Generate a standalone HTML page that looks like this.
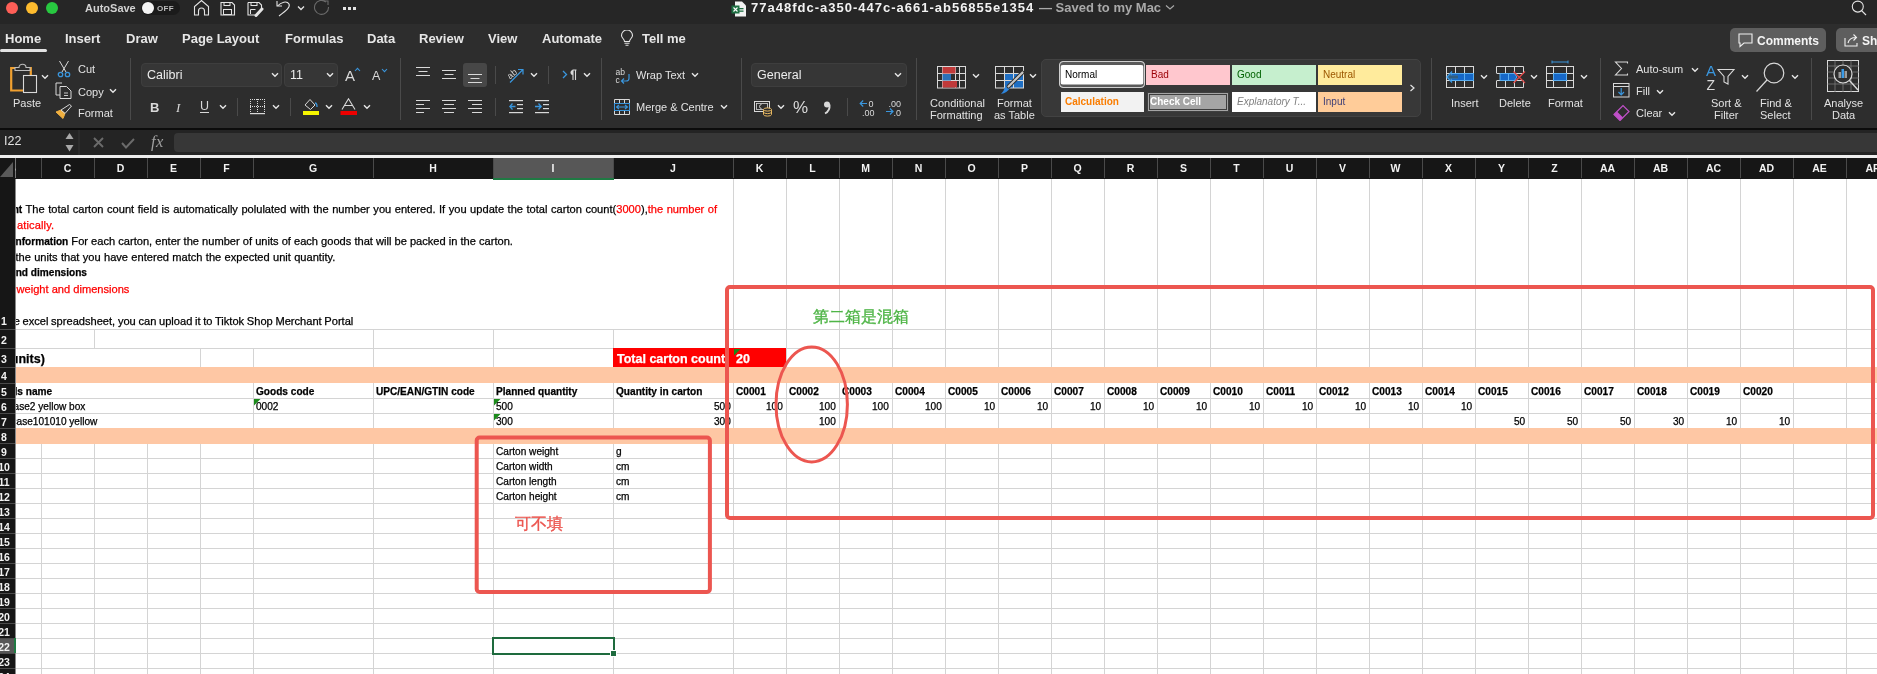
<!DOCTYPE html><html><head><meta charset="utf-8"><style>
html,body{margin:0;padding:0;}
body{width:1877px;height:674px;overflow:hidden;position:relative;background:#ffffff;font-family:"Liberation Sans", sans-serif;}
.t{position:absolute;white-space:pre;line-height:1;will-change:transform;}
.r{position:absolute;}
.g{-webkit-text-stroke:0.25px currentColor;}

</style></head><body>
<div class="r" style="left:0px;top:0px;width:1877px;height:24px;background:#262626;"></div>
<div class="r" style="left:0px;top:24px;width:1877px;height:104px;background:#2d2d2d;"></div>
<div class="r" style="left:0px;top:128px;width:1877px;height:1.5px;background:#0c0c0c;"></div>
<div class="r" style="left:0px;top:129.5px;width:1877px;height:25.5px;background:#242424;"></div>
<div class="r" style="left:0px;top:155px;width:1877px;height:3px;background:#eeeeee;"></div>
<div class="r" style="left:0px;top:158px;width:1877px;height:21px;background:#161616;"></div>
<div class="r" style="left:6px;top:2px;width:12px;height:12px;border-radius:50%;background:#fe5f57"></div>
<div class="r" style="left:26px;top:2px;width:12px;height:12px;border-radius:50%;background:#febc2e"></div>
<div class="r" style="left:46px;top:2px;width:12px;height:12px;border-radius:50%;background:#28c840"></div>
<div class="t" style="left:85px;top:3.09px;font-size:11px;color:#d2d2d2;font-weight:bold;">AutoSave</div>
<div class="r" style="left:141px;top:1px;width:39px;height:14px;border-radius:7px;background:#1b1b1b"></div>
<div class="r" style="left:142px;top:2px;width:12px;height:12px;border-radius:50%;background:#f4f4f4"></div>
<div class="t" style="left:157px;top:4.83px;font-size:8px;color:#bdbdbd;font-weight:bold;letter-spacing:0.3px;">OFF</div>
<svg class="r" style="left:193px;top:0px;" width="17" height="16" viewBox="0 0 17 16"><path d="M1.5 15 V6.5 L8.5 0.5 L15.5 6.5 V15 H11.5 V11 a3 3 0 0 0 -6 0 V15 Z" fill="none" stroke="#e4e4e4" stroke-width="1.1"/></svg>
<svg class="r" style="left:220px;top:1px;" width="16" height="15" viewBox="0 0 16 15"><path d="M1 1.5 h11 l2.5 2.5 v10 h-13.5 z" fill="none" stroke="#e4e4e4" stroke-width="1.1"/><rect x="4" y="1.5" width="6" height="3" fill="none" stroke="#e4e4e4" stroke-width="1"/><rect x="3.5" y="8.5" width="8" height="5" fill="none" stroke="#e4e4e4" stroke-width="1"/></svg>
<svg class="r" style="left:247px;top:1px;" width="17" height="16" viewBox="0 0 17 16"><path d="M1 1.5 h11 l2.5 2.5 v3 M8 14 h-7 v-12.5" fill="none" stroke="#e4e4e4" stroke-width="1.1"/><rect x="4" y="1.5" width="6" height="3" fill="none" stroke="#e4e4e4" stroke-width="1"/><path d="M3.5 13 v-4.5 h5" fill="none" stroke="#e4e4e4" stroke-width="1"/><path d="M9 14.5 L15 8" stroke="#e4e4e4" stroke-width="3" stroke-linecap="round"/></svg>
<svg class="r" style="left:275px;top:0px;" width="16" height="17" viewBox="0 0 16 17"><path d="M2 1 v5 h5" fill="none" stroke="#e4e4e4" stroke-width="1.1"/><path d="M2.5 6 C6 2 12 0.5 14 4 C15.5 7 12 10 4 16" fill="none" stroke="#e4e4e4" stroke-width="1.1"/></svg>
<svg class="r" style="left:297px;top:5px;" width="8" height="7" viewBox="0 0 8 7"><path d="M1 1.5 L4 4.5 L7 1.5" fill="none" stroke="#e4e4e4" stroke-width="1.3"/></svg>
<svg class="r" style="left:313px;top:0px;" width="18" height="17" viewBox="0 0 18 17"><path d="M13 2 A7 7 0 1 0 15.5 7" fill="none" stroke="#6a6a6a" stroke-width="1.1"/><path d="M11 1 h4 v4" fill="none" stroke="#6a6a6a" stroke-width="1.1"/></svg>
<div class="r" style="left:343px;top:7px;width:2.5px;height:2.5px;background:#e4e4e4"></div>
<div class="r" style="left:348px;top:7px;width:2.5px;height:2.5px;background:#e4e4e4"></div>
<div class="r" style="left:353px;top:7px;width:2.5px;height:2.5px;background:#e4e4e4"></div>
<svg class="r" style="left:731px;top:1px;" width="16" height="16" viewBox="0 0 16 16"><path d="M4 0.5 h7 l4 4 v11 h-11 z" fill="#f2f2f2"/><rect x="7.5" y="7" width="5" height="1.3" fill="#1d6f42"/><rect x="7.5" y="9.5" width="5" height="1.3" fill="#1d6f42"/><rect x="0.5" y="4.5" width="8" height="8" fill="#1d6f42"/><path d="M2.5 6.5 L6.5 10.5 M6.5 6.5 L2.5 10.5" stroke="#fff" stroke-width="1.1"/></svg>
<div class="t" style="left:751px;top:1.00px;font-size:13px;color:#f2f2f2;font-weight:bold;letter-spacing:1px;">77a48fdc-a350-447c-a661-ab56855e1354</div>
<div class="t" style="left:1039px;top:1.00px;font-size:13px;color:#a9a9a9;font-weight:bold;">— Saved to my Mac</div>
<svg class="r" style="left:1165px;top:4px;" width="10" height="7" viewBox="0 0 10 7"><path d="M1 1.5 L5 5 L9 1.5" fill="none" stroke="#a9a9a9" stroke-width="1.1"/></svg>
<svg class="r" style="left:1851px;top:0px;" width="17" height="17" viewBox="0 0 17 17"><circle cx="6.8" cy="6.6" r="5.5" fill="none" stroke="#e4e4e4" stroke-width="1.1"/><path d="M10.6 10.6 L15 15" stroke="#e4e4e4" stroke-width="1.2"/></svg>
<div class="t" style="left:4.5px;top:31.80px;font-size:13px;color:#e6e6e6;font-weight:bold;">Home</div>
<div class="t" style="left:64.6px;top:31.80px;font-size:13px;color:#e6e6e6;font-weight:bold;">Insert</div>
<div class="t" style="left:126.4px;top:31.80px;font-size:13px;color:#e6e6e6;font-weight:bold;">Draw</div>
<div class="t" style="left:182.3px;top:31.80px;font-size:13px;color:#e6e6e6;font-weight:bold;">Page Layout</div>
<div class="t" style="left:284.7px;top:31.80px;font-size:13px;color:#e6e6e6;font-weight:bold;">Formulas</div>
<div class="t" style="left:367.3px;top:31.80px;font-size:13px;color:#e6e6e6;font-weight:bold;">Data</div>
<div class="t" style="left:419.4px;top:31.80px;font-size:13px;color:#e6e6e6;font-weight:bold;">Review</div>
<div class="t" style="left:487.7px;top:31.80px;font-size:13px;color:#e6e6e6;font-weight:bold;">View</div>
<div class="t" style="left:542.4px;top:31.80px;font-size:13px;color:#e6e6e6;font-weight:bold;">Automate</div>
<div class="t" style="left:641.6px;top:31.80px;font-size:13px;color:#e6e6e6;font-weight:bold;">Tell me</div>
<div class="r" style="left:0px;top:49px;width:47px;height:3px;border-radius:2px;background:#e2e2e2"></div>
<svg class="r" style="left:620px;top:30px;" width="14" height="17" viewBox="0 0 14 17"><path d="M4.5 11.5 C4.5 9 1.5 8 1.5 5.5 A5.5 5.5 0 0 1 12.5 5.5 C12.5 8 9.5 9 9.5 11.5 Z" fill="none" stroke="#e4e4e4" stroke-width="1.1"/><path d="M4.5 13.3 h5 M5.5 15.3 h3" stroke="#e4e4e4" stroke-width="1.1"/></svg>
<div class="r" style="left:1730px;top:28px;width:96px;height:24px;border-radius:5px;background:#5e5e5e"></div>
<svg class="r" style="left:1738px;top:33px;" width="15" height="15" viewBox="0 0 15 15"><path d="M1 1 h13 v9 h-8 l-4 3.5 v-3.5 h-1 z" fill="none" stroke="#f0f0f0" stroke-width="1.1"/></svg>
<div class="t" style="left:1757px;top:35.14px;font-size:12px;color:#f4f4f4;font-weight:bold;">Comments</div>
<div class="r" style="left:1836px;top:28px;width:60px;height:24px;border-radius:5px;background:#5e5e5e"></div>
<svg class="r" style="left:1844px;top:33px;" width="15" height="14" viewBox="0 0 15 14"><path d="M1 5 v8 h12 v-3" fill="none" stroke="#f0f0f0" stroke-width="1.1"/><path d="M4 10 C5 6 8 4.5 12 4.5 M9.5 1.5 L12.5 4.5 L9.5 7.5" fill="none" stroke="#f0f0f0" stroke-width="1.1"/></svg>
<div class="t" style="left:1862px;top:35.14px;font-size:12px;color:#f4f4f4;font-weight:bold;">Sh</div>
<svg class="r" style="left:9px;top:61px;" width="30" height="33" viewBox="0 0 30 33"><path d="M9 7 H2.2 V29.5 H14" fill="none" stroke="#f0a030" stroke-width="2.2"/><path d="M19 7 H21.8 V14" fill="none" stroke="#f0a030" stroke-width="2.2"/><path d="M6 9.5 V6.5 H10 A3.5 3.2 0 0 1 17 6.5 H21 V9.5 Z" fill="#2d2d2d" stroke="#bdbdbd" stroke-width="1.1"/><rect x="14.5" y="14.5" width="13" height="17" fill="#2d2d2d" stroke="#d9d9d9" stroke-width="1.1"/></svg>
<svg class="r" style="left:41px;top:74px;" width="8" height="6" viewBox="0 0 8 6"><path d="M1 1.2 L4 4.2 L7 1.2" fill="none" stroke="#e6e6e6" stroke-width="1.4"/></svg>
<div class="t" style="left:13.3px;top:97.69px;font-size:11px;color:#e2e2e2;font-weight:normal;">Paste</div>
<svg class="r" style="left:57px;top:60px;" width="14" height="18" viewBox="0 0 14 18"><path d="M2.5 1 L9 12 M11.5 1 L5 12" stroke="#d9d9d9" stroke-width="1"/><circle cx="3.5" cy="14.5" r="2.2" fill="none" stroke="#3a96dd" stroke-width="1.3"/><circle cx="10.5" cy="14.5" r="2.2" fill="none" stroke="#3a96dd" stroke-width="1.3"/></svg>
<div class="t" style="left:78.3px;top:64.49px;font-size:11px;color:#e2e2e2;font-weight:normal;">Cut</div>
<svg class="r" style="left:55px;top:82px;" width="18" height="18" viewBox="0 0 18 18"><path d="M7 1 H1 V13 H5" fill="none" stroke="#d9d9d9" stroke-width="1"/><path d="M5 4.5 H11.5 L16 9 V16.5 H5 Z" fill="none" stroke="#d9d9d9" stroke-width="1"/><path d="M9 11 H13 M9 13.5 H13" stroke="#d9d9d9" stroke-width="0.9"/></svg>
<div class="t" style="left:78.3px;top:86.89px;font-size:11px;color:#e2e2e2;font-weight:normal;">Copy</div>
<svg class="r" style="left:109px;top:88px;" width="8" height="6" viewBox="0 0 8 6"><path d="M1 1.2 L4 4.2 L7 1.2" fill="none" stroke="#e6e6e6" stroke-width="1.4"/></svg>
<svg class="r" style="left:55px;top:104px;" width="18" height="17" viewBox="0 0 18 17"><path d="M1 8 L8 14.5 L10 9.5 L6 6 Z" fill="#f0b040" stroke="#f0b040" stroke-width="1"/><path d="M6 6 L10 9.5 L16.5 2 L14.5 0.5 Z" fill="none" stroke="#d9d9d9" stroke-width="1"/></svg>
<div class="t" style="left:78.3px;top:108.09px;font-size:11px;color:#e2e2e2;font-weight:normal;">Format</div>
<div class="r" style="left:130px;top:58px;width:1px;height:62px;background:#4a4a4a;"></div>
<div class="r" style="left:141px;top:63px;width:139px;height:22px;border-radius:4px;background:#363636;border:1px solid #3e3e3e"></div>
<div class="t" style="left:147.4px;top:69.12px;font-size:12.5px;color:#ececec;font-weight:normal;">Calibri</div>
<svg class="r" style="left:271px;top:72px;" width="8" height="6" viewBox="0 0 8 6"><path d="M1 1.2 L4 4.2 L7 1.2" fill="none" stroke="#e6e6e6" stroke-width="1.4"/></svg>
<div class="r" style="left:284px;top:63px;width:52px;height:22px;border-radius:4px;background:#363636;border:1px solid #3e3e3e"></div>
<div class="t" style="left:290.3px;top:69.12px;font-size:12.5px;color:#ececec;font-weight:normal;">11</div>
<svg class="r" style="left:326px;top:72px;" width="8" height="6" viewBox="0 0 8 6"><path d="M1 1.2 L4 4.2 L7 1.2" fill="none" stroke="#e6e6e6" stroke-width="1.4"/></svg>
<div class="t" style="left:344.5px;top:67.70px;font-size:15px;color:#d9d9d9;font-weight:normal;">A</div>
<svg class="r" style="left:354px;top:67px;" width="7" height="5" viewBox="0 0 7 5"><path d="M1 4 L3.5 1.3 L6 4" fill="none" stroke="#3a96dd" stroke-width="1.1"/></svg>
<div class="t" style="left:372px;top:69.82px;font-size:12.5px;color:#d9d9d9;font-weight:normal;">A</div>
<svg class="r" style="left:380.5px;top:67.5px;" width="7" height="5" viewBox="0 0 7 5"><path d="M1 1 L3.5 3.7 L6 1" fill="none" stroke="#3a96dd" stroke-width="1.1"/></svg>
<div class="t" style="left:149.5px;top:100.50px;font-size:13px;color:#d9d9d9;font-weight:bold;">B</div>
<div class="t" style="left:176px;top:100.50px;font-size:13px;color:#d9d9d9;font-weight:normal;font-style:italic;font-family:&quot;Liberation Serif&quot;,serif;">I</div>
<div class="t" style="left:200px;top:99.92px;font-size:12.5px;color:#d9d9d9;font-weight:normal;">U</div>
<div class="r" style="left:200px;top:112px;width:9px;height:1px;background:#d9d9d9;"></div>
<svg class="r" style="left:219px;top:104px;" width="8" height="6" viewBox="0 0 8 6"><path d="M1 1.2 L4 4.2 L7 1.2" fill="none" stroke="#e6e6e6" stroke-width="1.4"/></svg>
<div class="r" style="left:237px;top:98px;width:1px;height:18px;background:#4a4a4a;"></div>
<svg class="r" style="left:250px;top:99px;" width="16" height="16" viewBox="0 0 16 16"><rect x="0" y="0" width="1" height="1" fill="#d9d9d9"/><rect x="0" y="0" width="1" height="1" fill="#d9d9d9"/><rect x="14" y="0" width="1" height="1" fill="#d9d9d9"/><rect x="7" y="0" width="1" height="1" fill="#d9d9d9"/><rect x="0" y="7" width="1" height="1" fill="#d9d9d9"/><rect x="2" y="0" width="1" height="1" fill="#d9d9d9"/><rect x="0" y="2" width="1" height="1" fill="#d9d9d9"/><rect x="14" y="2" width="1" height="1" fill="#d9d9d9"/><rect x="7" y="2" width="1" height="1" fill="#d9d9d9"/><rect x="2" y="7" width="1" height="1" fill="#d9d9d9"/><rect x="4" y="0" width="1" height="1" fill="#d9d9d9"/><rect x="0" y="4" width="1" height="1" fill="#d9d9d9"/><rect x="14" y="4" width="1" height="1" fill="#d9d9d9"/><rect x="7" y="4" width="1" height="1" fill="#d9d9d9"/><rect x="4" y="7" width="1" height="1" fill="#d9d9d9"/><rect x="6" y="0" width="1" height="1" fill="#d9d9d9"/><rect x="0" y="6" width="1" height="1" fill="#d9d9d9"/><rect x="14" y="6" width="1" height="1" fill="#d9d9d9"/><rect x="7" y="6" width="1" height="1" fill="#d9d9d9"/><rect x="6" y="7" width="1" height="1" fill="#d9d9d9"/><rect x="8" y="0" width="1" height="1" fill="#d9d9d9"/><rect x="0" y="8" width="1" height="1" fill="#d9d9d9"/><rect x="14" y="8" width="1" height="1" fill="#d9d9d9"/><rect x="7" y="8" width="1" height="1" fill="#d9d9d9"/><rect x="8" y="7" width="1" height="1" fill="#d9d9d9"/><rect x="10" y="0" width="1" height="1" fill="#d9d9d9"/><rect x="0" y="10" width="1" height="1" fill="#d9d9d9"/><rect x="14" y="10" width="1" height="1" fill="#d9d9d9"/><rect x="7" y="10" width="1" height="1" fill="#d9d9d9"/><rect x="10" y="7" width="1" height="1" fill="#d9d9d9"/><rect x="12" y="0" width="1" height="1" fill="#d9d9d9"/><rect x="0" y="12" width="1" height="1" fill="#d9d9d9"/><rect x="14" y="12" width="1" height="1" fill="#d9d9d9"/><rect x="7" y="12" width="1" height="1" fill="#d9d9d9"/><rect x="12" y="7" width="1" height="1" fill="#d9d9d9"/><rect x="14" y="0" width="1" height="1" fill="#d9d9d9"/><rect x="0" y="14" width="1" height="1" fill="#d9d9d9"/><rect x="14" y="14" width="1" height="1" fill="#d9d9d9"/><rect x="7" y="14" width="1" height="1" fill="#d9d9d9"/><rect x="14" y="7" width="1" height="1" fill="#d9d9d9"/><rect x="0" y="14" width="15" height="1.2" fill="#d9d9d9"/></svg>
<svg class="r" style="left:272px;top:104px;" width="8" height="6" viewBox="0 0 8 6"><path d="M1 1.2 L4 4.2 L7 1.2" fill="none" stroke="#e6e6e6" stroke-width="1.4"/></svg>
<div class="r" style="left:290px;top:98px;width:1px;height:18px;background:#4a4a4a;"></div>
<svg class="r" style="left:302px;top:98px;" width="18" height="18" viewBox="0 0 18 18"><path d="M3 7 L8 1.5 L13 7 L8.5 11.5 Z" fill="none" stroke="#d9d9d9" stroke-width="1"/><path d="M13 5 Q15 5 15 9" fill="none" stroke="#3a96dd" stroke-width="1.3"/><rect x="1" y="13" width="16" height="4" fill="#f5f500"/></svg>
<svg class="r" style="left:325px;top:104px;" width="8" height="6" viewBox="0 0 8 6"><path d="M1 1.2 L4 4.2 L7 1.2" fill="none" stroke="#e6e6e6" stroke-width="1.4"/></svg>
<svg class="r" style="left:340px;top:98px;" width="18" height="18" viewBox="0 0 18 18"><path d="M2 11.5 L8.5 0.8 L15 11.5 M4.5 7.5 H12.5" fill="none" stroke="#d9d9d9" stroke-width="1.1"/><rect x="0.5" y="13" width="16.5" height="4" fill="#ee0000"/></svg>
<svg class="r" style="left:363px;top:104px;" width="8" height="6" viewBox="0 0 8 6"><path d="M1 1.2 L4 4.2 L7 1.2" fill="none" stroke="#e6e6e6" stroke-width="1.4"/></svg>
<div class="r" style="left:400px;top:58px;width:1px;height:62px;background:#4a4a4a;"></div>
<svg class="r" style="left:416px;top:67px;" width="14" height="14" viewBox="0 0 14 14"><rect x="0.0" y="0" width="14" height="1" fill="#d9d9d9"/><rect x="2.5" y="4" width="9" height="1" fill="#d9d9d9"/><rect x="0.0" y="8" width="14" height="1" fill="#d9d9d9"/></svg>
<svg class="r" style="left:442px;top:70px;" width="14" height="14" viewBox="0 0 14 14"><rect x="0.0" y="0" width="14" height="1" fill="#d9d9d9"/><rect x="2.5" y="4" width="9" height="1" fill="#d9d9d9"/><rect x="0.0" y="8" width="14" height="1" fill="#d9d9d9"/></svg>
<div class="r" style="left:463px;top:63px;width:24px;height:24px;border-radius:3px;background:#474747"></div>
<svg class="r" style="left:468px;top:74px;" width="14" height="14" viewBox="0 0 14 14"><rect x="0.0" y="0" width="14" height="1" fill="#d9d9d9"/><rect x="2.5" y="4" width="9" height="1" fill="#d9d9d9"/><rect x="0.0" y="8" width="14" height="1" fill="#d9d9d9"/></svg>
<div class="r" style="left:495px;top:66px;width:1px;height:18px;background:#4a4a4a;"></div>
<svg class="r" style="left:506px;top:66px;" width="20" height="18" viewBox="0 0 20 18"><text x="1" y="11" font-size="9" fill="#d9d9d9" font-family="Liberation Sans" transform="rotate(-40 6 8)">ab</text><path d="M4 16.5 L17 3.5 M12 3.5 H17 V8.5" fill="none" stroke="#3a96dd" stroke-width="1.2"/></svg>
<svg class="r" style="left:530px;top:72px;" width="8" height="6" viewBox="0 0 8 6"><path d="M1 1.2 L4 4.2 L7 1.2" fill="none" stroke="#e6e6e6" stroke-width="1.4"/></svg>
<div class="r" style="left:548px;top:66px;width:1px;height:18px;background:#4a4a4a;"></div>
<svg class="r" style="left:562px;top:70px;" width="6" height="10" viewBox="0 0 6 10"><path d="M1 1 L4.5 4.5 L1 8" fill="none" stroke="#3a96dd" stroke-width="1.3"/></svg>
<svg class="r" style="left:568px;top:69px;" width="9" height="12" viewBox="0 0 9 12"><path d="M4.5 1 H8.5 M5 1 V11 M7.5 1 V11" stroke="#d9d9d9" stroke-width="1.1"/><path d="M5 1 A2.5 2.5 0 0 0 5 6 Z" fill="#d9d9d9"/></svg>
<svg class="r" style="left:583px;top:72px;" width="8" height="6" viewBox="0 0 8 6"><path d="M1 1.2 L4 4.2 L7 1.2" fill="none" stroke="#e6e6e6" stroke-width="1.4"/></svg>
<svg class="r" style="left:416px;top:100px;" width="14" height="18" viewBox="0 0 14 18"><rect x="0" y="0" width="14" height="1" fill="#d9d9d9"/><rect x="0" y="4" width="8" height="1" fill="#d9d9d9"/><rect x="0" y="8" width="14" height="1" fill="#d9d9d9"/><rect x="0" y="12" width="8" height="1" fill="#d9d9d9"/></svg>
<svg class="r" style="left:442px;top:100px;" width="14" height="18" viewBox="0 0 14 18"><rect x="0.0" y="0" width="14" height="1" fill="#d9d9d9"/><rect x="2.0" y="4" width="10" height="1" fill="#d9d9d9"/><rect x="0.0" y="8" width="14" height="1" fill="#d9d9d9"/><rect x="2.0" y="12" width="10" height="1" fill="#d9d9d9"/></svg>
<svg class="r" style="left:468px;top:100px;" width="14" height="18" viewBox="0 0 14 18"><rect x="0" y="0" width="14" height="1" fill="#d9d9d9"/><rect x="4" y="4" width="10" height="1" fill="#d9d9d9"/><rect x="0" y="8" width="14" height="1" fill="#d9d9d9"/><rect x="4" y="12" width="10" height="1" fill="#d9d9d9"/></svg>
<div class="r" style="left:495px;top:98px;width:1px;height:18px;background:#4a4a4a;"></div>
<svg class="r" style="left:509px;top:100px;" width="15" height="14" viewBox="0 0 15 14"><rect x="0" y="0" width="14" height="1.2" fill="#d9d9d9"/><rect x="8" y="4" width="6" height="1.2" fill="#d9d9d9"/><rect x="8" y="8" width="6" height="1.2" fill="#d9d9d9"/><rect x="0" y="12" width="14" height="1.2" fill="#d9d9d9"/><path d="M1 6.5 H6.5 M3.5 3.5 L0.8 6.5 L3.5 9.5" fill="none" stroke="#3a96dd" stroke-width="1.3"/></svg>
<svg class="r" style="left:535px;top:100px;" width="15" height="14" viewBox="0 0 15 14"><rect x="0" y="0" width="14" height="1.2" fill="#d9d9d9"/><rect x="8" y="4" width="6" height="1.2" fill="#d9d9d9"/><rect x="8" y="8" width="6" height="1.2" fill="#d9d9d9"/><rect x="0" y="12" width="14" height="1.2" fill="#d9d9d9"/><path d="M0 6.5 H6 M3.5 3.5 L6.2 6.5 L3.5 9.5" fill="none" stroke="#3a96dd" stroke-width="1.3"/></svg>
<div class="r" style="left:601px;top:58px;width:1px;height:62px;background:#4a4a4a;"></div>
<svg class="r" style="left:615px;top:67px;" width="17" height="17" viewBox="0 0 17 17"><text x="0.5" y="7.5" font-size="8.5" fill="#d9d9d9" font-family="Liberation Sans">ab</text><text x="0.5" y="15.5" font-size="8.5" fill="#d9d9d9" font-family="Liberation Sans">c</text><path d="M14 7 V11.5 Q14 14 11 14 H6.5 M9 11.5 L6.5 14 L9 16.5" fill="none" stroke="#3a96dd" stroke-width="1.2"/></svg>
<div class="t" style="left:636px;top:70.39px;font-size:11px;color:#e2e2e2;font-weight:normal;">Wrap Text</div>
<svg class="r" style="left:691px;top:72px;" width="8" height="6" viewBox="0 0 8 6"><path d="M1 1.2 L4 4.2 L7 1.2" fill="none" stroke="#e6e6e6" stroke-width="1.4"/></svg>
<svg class="r" style="left:613px;top:98px;" width="18" height="18" viewBox="0 0 18 18"><path d="M1.5 5.5 V1.5 H16.5 V5.5 M1.5 12.5 V16.5 H16.5 V12.5 M6.5 1.5 V5.5 M11.5 1.5 V5.5 M6.5 12.5 V16.5 M11.5 12.5 V16.5" fill="none" stroke="#d9d9d9" stroke-width="1"/><rect x="1.5" y="5.5" width="15" height="7" fill="none" stroke="#3a96dd" stroke-width="1"/><path d="M3.5 9 H14.5 M6 7 L3.5 9 L6 11 M12 7 L14.5 9 L12 11" fill="none" stroke="#3a96dd" stroke-width="1.1"/></svg>
<div class="t" style="left:636px;top:101.99px;font-size:11px;color:#e2e2e2;font-weight:normal;">Merge &amp; Centre</div>
<svg class="r" style="left:720px;top:104px;" width="8" height="6" viewBox="0 0 8 6"><path d="M1 1.2 L4 4.2 L7 1.2" fill="none" stroke="#e6e6e6" stroke-width="1.4"/></svg>
<div class="r" style="left:740.5px;top:58px;width:1px;height:62px;background:#4a4a4a;"></div>
<div class="r" style="left:751px;top:63px;width:154px;height:22px;border-radius:4px;background:#363636;border:1px solid #3e3e3e"></div>
<div class="t" style="left:757px;top:69.12px;font-size:12.5px;color:#ececec;font-weight:normal;">General</div>
<svg class="r" style="left:894px;top:72px;" width="8" height="6" viewBox="0 0 8 6"><path d="M1 1.2 L4 4.2 L7 1.2" fill="none" stroke="#e6e6e6" stroke-width="1.4"/></svg>
<svg class="r" style="left:754px;top:100px;" width="19" height="17" viewBox="0 0 19 17"><rect x="0.5" y="1.5" width="15" height="10" fill="none" stroke="#d9d9d9" stroke-width="1"/><rect x="2.5" y="3.5" width="11" height="6" fill="none" stroke="#d9d9d9" stroke-width="0.8"/><path d="M7.5 4.5 A2 2 0 1 0 7.5 8.5" fill="none" stroke="#d9d9d9" stroke-width="0.9"/><path d="M9.5 9.5 V14.5 A4 1.6 0 0 0 17.5 14.5 V9.5" fill="#2d2d2d" stroke="#e8b860" stroke-width="1"/><ellipse cx="13.5" cy="9.5" rx="4" ry="1.6" fill="#2d2d2d" stroke="#e8b860" stroke-width="1"/><path d="M9.5 12 A4 1.6 0 0 0 17.5 12" fill="none" stroke="#e8b860" stroke-width="1"/></svg>
<svg class="r" style="left:777px;top:104px;" width="8" height="6" viewBox="0 0 8 6"><path d="M1 1.2 L4 4.2 L7 1.2" fill="none" stroke="#e6e6e6" stroke-width="1.4"/></svg>
<div class="t" style="left:793px;top:99.11px;font-size:17px;color:#d9d9d9;font-weight:normal;">%</div>
<svg class="r" style="left:822px;top:100px;" width="11" height="15" viewBox="0 0 11 15"><circle cx="5" cy="4.5" r="3" fill="#d9d9d9"/><path d="M7.6 4.5 C8 9 6 12 3 13.5" fill="none" stroke="#d9d9d9" stroke-width="1.8"/></svg>
<div class="r" style="left:847px;top:98px;width:1px;height:18px;background:#4a4a4a;"></div>
<svg class="r" style="left:859px;top:99px;" width="18" height="17" viewBox="0 0 18 17"><path d="M1.5 4.5 H8 M4.2 1.5 L1.2 4.5 L4.2 7.5" fill="none" stroke="#3a96dd" stroke-width="1.2"/><text x="9.5" y="8" font-size="9" fill="#d9d9d9" font-family="Liberation Sans">0</text><text x="3" y="16.5" font-size="9" fill="#d9d9d9" font-family="Liberation Sans">.00</text></svg>
<svg class="r" style="left:885px;top:99px;" width="18" height="17" viewBox="0 0 18 17"><text x="3.5" y="8" font-size="9" fill="#d9d9d9" font-family="Liberation Sans">.00</text><path d="M1 12.5 H8 M5 9.5 L8 12.5 L5 15.5" fill="none" stroke="#3a96dd" stroke-width="1.2"/><text x="8.5" y="16.5" font-size="9" fill="#d9d9d9" font-family="Liberation Sans">.0</text></svg>
<div class="r" style="left:916px;top:58px;width:1px;height:62px;background:#4a4a4a;"></div>
<svg class="r" style="left:937px;top:66px;" width="30" height="24" viewBox="0 0 30 24"><rect x="0.5" y="0.5" width="28" height="21.5" fill="none" stroke="#d9d9d9" stroke-width="1"/><path d="M5.5 0.5 V22 M18.5 0.5 V22 M22.5 0.5 V22 M0.5 7.5 H28.5 M0.5 14.5 H28.5" stroke="#d9d9d9" stroke-width="1"/><rect x="5.5" y="1" width="13" height="6.5" fill="#c03a3a"/><rect x="5.5" y="8" width="8.5" height="6.5" fill="#2a70b8"/><rect x="5.5" y="15" width="14.5" height="6.5" fill="#c03a3a"/></svg>
<svg class="r" style="left:972px;top:73px;" width="8" height="6" viewBox="0 0 8 6"><path d="M1 1.2 L4 4.2 L7 1.2" fill="none" stroke="#e6e6e6" stroke-width="1.4"/></svg>
<div class="t" style="left:929.6px;top:98.29px;font-size:11px;color:#e2e2e2;font-weight:normal;">Conditional</div>
<div class="t" style="left:930px;top:110.09px;font-size:11px;color:#e2e2e2;font-weight:normal;">Formatting</div>
<svg class="r" style="left:995px;top:66px;" width="31" height="30" viewBox="0 0 31 30"><rect x="9.5" y="7.5" width="19" height="14.5" fill="#1f6fc4"/><rect x="0.5" y="0.5" width="28" height="21.5" fill="none" stroke="#d9d9d9" stroke-width="1"/><path d="M9.5 0.5 V22 M18.5 0.5 V22 M0.5 7.5 H28.5 M0.5 14.5 H28.5" stroke="#d9d9d9" stroke-width="1"/><path d="M15 22 Q12 27 6 28 Q9 25 10 21 Q12 18 15 20 Z" fill="#2e86de"/><path d="M13.5 20.5 L27.5 6.5" stroke="#2d2d2d" stroke-width="4" stroke-linecap="round"/><path d="M13.5 20.5 L27.5 6.5" stroke="#c8c8c8" stroke-width="2.2" stroke-linecap="round"/></svg>
<svg class="r" style="left:1029px;top:73px;" width="8" height="6" viewBox="0 0 8 6"><path d="M1 1.2 L4 4.2 L7 1.2" fill="none" stroke="#e6e6e6" stroke-width="1.4"/></svg>
<div class="t" style="left:996.8px;top:98.29px;font-size:11px;color:#e2e2e2;font-weight:normal;">Format</div>
<div class="t" style="left:994px;top:110.09px;font-size:11px;color:#e2e2e2;font-weight:normal;">as Table</div>
<div class="r" style="left:1041px;top:59px;width:378px;height:56px;border-radius:5px;background:#383838;border:1px solid #424242"></div>
<div class="r" style="left:1059px;top:61px;width:86px;height:26.5px;border-radius:4px;background:#ffffff;box-sizing:border-box;border:1px solid #d0d0d0;box-shadow:inset 0 3px 0 #5a5a5a, inset 0 -2.5px 0 #5a5a5a, inset 1px 0 0 #8a8a8a, inset -1px 0 0 #8a8a8a;"></div>
<div class="t" style="left:1064.5px;top:69.94px;font-size:10px;color:#000;font-weight:normal;">Normal</div>
<div class="r" style="left:1146px;top:65px;width:84px;height:20px;background:#ffc7ce;"></div>
<div class="t" style="left:1150.5px;top:70.03px;font-size:10px;color:#9c0006;font-weight:normal;">Bad</div>
<div class="r" style="left:1232px;top:65px;width:84px;height:20px;background:#c6efce;"></div>
<div class="t" style="left:1236.5px;top:70.03px;font-size:10px;color:#006100;font-weight:normal;">Good</div>
<div class="r" style="left:1318px;top:65px;width:84px;height:20px;background:#ffeb9c;"></div>
<div class="t" style="left:1322.5px;top:70.03px;font-size:10px;color:#9c5700;font-weight:normal;">Neutral</div>
<div class="r" style="left:1060.5px;top:92px;width:83px;height:19.5px;background:#f2f2f2;"></div>
<div class="t" style="left:1065.0px;top:96.53px;font-size:10px;color:#fa7d00;font-weight:normal;font-weight:bold;">Calculation</div>
<div class="r" style="left:1147px;top:92px;width:82px;height:19.5px;background:#a5a5a5;box-shadow:inset 0 0 0 1px #3f3f3f, inset 0 0 0 2px #a5a5a5, inset 0 0 0 3px #3f3f3f;"></div>
<div class="t" style="left:1150px;top:97.03px;font-size:10px;color:#ffffff;font-weight:bold;">Check Cell</div>
<div class="r" style="left:1232px;top:92px;width:84px;height:19.5px;background:#ffffff;"></div>
<div class="t" style="left:1236.5px;top:96.53px;font-size:10px;color:#7f7f7f;font-weight:normal;font-style:italic;">Explanatory T...</div>
<div class="r" style="left:1318px;top:92px;width:84px;height:19.5px;background:#ffcc99;"></div>
<div class="t" style="left:1322.5px;top:96.53px;font-size:10px;color:#3f3f76;font-weight:normal;">Input</div>
<svg class="r" style="left:1409px;top:84px;" width="7" height="8" viewBox="0 0 7 8"><path d="M1.5 1 L5 4 L1.5 7" fill="none" stroke="#e6e6e6" stroke-width="1.2"/></svg>
<div class="r" style="left:1431px;top:58px;width:1px;height:62px;background:#4a4a4a;"></div>
<svg class="r" style="left:1446px;top:66px;" width="32" height="23" viewBox="0 0 32 23"><rect x="0.5" y="0.5" width="27" height="21" fill="none" stroke="#d9d9d9" stroke-width="1"/><path d="M9.5 0.5 V21.5 M18.5 0.5 V21.5 M0.5 7.5 H27.5 M0.5 14.5 H27.5" stroke="#d9d9d9" stroke-width="1"/><rect x="5" y="7.5" width="22.5" height="7" fill="#1668c8" stroke="#5aaef0" stroke-width="1"/><path d="M18.5 7.5 V14.5" stroke="#5aaef0" stroke-width="1"/><path d="M1.5 11 H12" stroke="#2d2d2d" stroke-width="3.2"/><path d="M1.5 10 H12 M1.5 12 H12" stroke="#3a9be8" stroke-width="0.9"/><path d="M6 5.5 L1 11 L6 16.5" fill="none" stroke="#3a9be8" stroke-width="1.2"/></svg>
<svg class="r" style="left:1480px;top:74px;" width="8" height="6" viewBox="0 0 8 6"><path d="M1 1.2 L4 4.2 L7 1.2" fill="none" stroke="#e6e6e6" stroke-width="1.4"/></svg>
<div class="t" style="left:1451px;top:97.69px;font-size:11px;color:#e2e2e2;font-weight:normal;">Insert</div>
<svg class="r" style="left:1496px;top:66px;" width="31" height="23" viewBox="0 0 31 23"><path d="M0.5 7 V0.5 H27.5 V7 M0.5 15 V21.5 H27.5 V15" fill="none" stroke="#d9d9d9" stroke-width="1"/><path d="M9.5 0.5 V7.5 M18.5 0.5 V7.5 M9.5 14.5 V21.5 M18.5 14.5 V21.5 M0.5 7.5 H27.5 M0.5 14.5 H27.5" stroke="#d9d9d9" stroke-width="1"/><path d="M4 7.5 H18.5 L21 11 L18.5 14.5 H4 Z" fill="#1668c8" stroke="#5aaef0" stroke-width="1"/><path d="M12.5 7.5 V14.5" stroke="#5aaef0" stroke-width="1"/><path d="M17.5 5.5 L29 17 M29 5.5 L17.5 17" stroke="#e04848" stroke-width="1.3"/></svg>
<svg class="r" style="left:1530px;top:74px;" width="8" height="6" viewBox="0 0 8 6"><path d="M1 1.2 L4 4.2 L7 1.2" fill="none" stroke="#e6e6e6" stroke-width="1.4"/></svg>
<div class="t" style="left:1499px;top:97.69px;font-size:11px;color:#e2e2e2;font-weight:normal;">Delete</div>
<svg class="r" style="left:1546px;top:60px;" width="30" height="29" viewBox="0 0 30 29"><path d="M6 2 H22 M6 0.5 V3.5 M22 0.5 V3.5" stroke="#3a96dd" stroke-width="1"/><g transform="translate(0,6)"><rect x="0.5" y="0.5" width="27" height="21" fill="none" stroke="#d9d9d9" stroke-width="1"/><path d="M7.5 0.5 V21.5 M20.5 0.5 V21.5 M0.5 7.5 H27.5 M0.5 14.5 H27.5" stroke="#d9d9d9" stroke-width="1"/><rect x="7.5" y="7.5" width="13" height="7" fill="#1668c8" stroke="#5aaef0" stroke-width="1"/></g></svg>
<svg class="r" style="left:1580px;top:74px;" width="8" height="6" viewBox="0 0 8 6"><path d="M1 1.2 L4 4.2 L7 1.2" fill="none" stroke="#e6e6e6" stroke-width="1.4"/></svg>
<div class="t" style="left:1548.3px;top:97.69px;font-size:11px;color:#e2e2e2;font-weight:normal;">Format</div>
<div class="r" style="left:1600px;top:58px;width:1px;height:62px;background:#4a4a4a;"></div>
<svg class="r" style="left:1614px;top:61px;" width="15" height="15" viewBox="0 0 15 15"><path d="M13.5 2.5 V1 H1.5 L7.5 7.5 L1.5 14 H13.5 V12.5" fill="none" stroke="#d9d9d9" stroke-width="1.1"/></svg>
<div class="t" style="left:1636px;top:63.69px;font-size:11px;color:#e2e2e2;font-weight:normal;">Auto-sum</div>
<svg class="r" style="left:1691px;top:67px;" width="8" height="6" viewBox="0 0 8 6"><path d="M1 1.2 L4 4.2 L7 1.2" fill="none" stroke="#e6e6e6" stroke-width="1.4"/></svg>
<svg class="r" style="left:1613px;top:83px;" width="18" height="15" viewBox="0 0 18 15"><rect x="0.5" y="0.5" width="15.5" height="13.5" fill="none" stroke="#d9d9d9" stroke-width="1"/><path d="M0.5 3.5 H16" stroke="#d9d9d9" stroke-width="1"/><path d="M8.2 5 V11.5 M5.5 9 L8.2 11.8 L11 9" fill="none" stroke="#3a96dd" stroke-width="1.2"/></svg>
<div class="t" style="left:1636px;top:86.19px;font-size:11px;color:#e2e2e2;font-weight:normal;">Fill</div>
<svg class="r" style="left:1656px;top:89px;" width="8" height="6" viewBox="0 0 8 6"><path d="M1 1.2 L4 4.2 L7 1.2" fill="none" stroke="#e6e6e6" stroke-width="1.4"/></svg>
<svg class="r" style="left:1613px;top:104px;" width="17" height="17" viewBox="0 0 17 17"><path d="M1 10.5 L10 1.5 L16 7.5 L7 16.5 Z" fill="none" stroke="#c050c8" stroke-width="1.2"/><path d="M1 10.5 L4 7.5 L10 13.5 L7 16.5 Z" fill="#c050c8"/></svg>
<div class="t" style="left:1636px;top:108.19px;font-size:11px;color:#e2e2e2;font-weight:normal;">Clear</div>
<svg class="r" style="left:1668px;top:111px;" width="8" height="6" viewBox="0 0 8 6"><path d="M1 1.2 L4 4.2 L7 1.2" fill="none" stroke="#e6e6e6" stroke-width="1.4"/></svg>
<svg class="r" style="left:1706px;top:62px;" width="30" height="30" viewBox="0 0 30 30"><text x="0" y="13.7" font-size="15" fill="#3a96dd" font-family="Liberation Sans">A</text><text x="0.5" y="27.7" font-size="14" fill="#d9d9d9" font-family="Liberation Sans">Z</text><path d="M12 7.5 H28 L22 14.5 V22 L18 20 V14.5 Z" fill="none" stroke="#d9d9d9" stroke-width="1.1"/></svg>
<svg class="r" style="left:1741px;top:74px;" width="8" height="6" viewBox="0 0 8 6"><path d="M1 1.2 L4 4.2 L7 1.2" fill="none" stroke="#e6e6e6" stroke-width="1.4"/></svg>
<div class="t" style="left:1711px;top:98.19px;font-size:11px;color:#e2e2e2;font-weight:normal;">Sort &amp;</div>
<div class="t" style="left:1714px;top:110.19px;font-size:11px;color:#e2e2e2;font-weight:normal;">Filter</div>
<svg class="r" style="left:1755px;top:62px;" width="30" height="31" viewBox="0 0 30 31"><circle cx="19" cy="11" r="9.8" fill="none" stroke="#d9d9d9" stroke-width="1.2"/><path d="M12 18 L1.5 29.5" stroke="#d9d9d9" stroke-width="1.2"/></svg>
<svg class="r" style="left:1791px;top:74px;" width="8" height="6" viewBox="0 0 8 6"><path d="M1 1.2 L4 4.2 L7 1.2" fill="none" stroke="#e6e6e6" stroke-width="1.4"/></svg>
<div class="t" style="left:1760px;top:98.19px;font-size:11px;color:#e2e2e2;font-weight:normal;">Find &amp;</div>
<div class="t" style="left:1760px;top:110.19px;font-size:11px;color:#e2e2e2;font-weight:normal;">Select</div>
<div class="r" style="left:1811px;top:58px;width:1px;height:62px;background:#4a4a4a;"></div>
<svg class="r" style="left:1827px;top:60px;" width="34" height="34" viewBox="0 0 34 34"><rect x="0.5" y="0.5" width="31" height="31" fill="none" stroke="#d9d9d9" stroke-width="1"/><path d="M0.5 6 H32 M0.5 12 H32 M0.5 18 H32 M0.5 24 H32 M8 0.5 V32 M16 0.5 V32 M24 0.5 V32" stroke="#7a7a7a" stroke-width="0.8"/><circle cx="16" cy="14" r="9" fill="#2d2d2d" stroke="#d9d9d9" stroke-width="1.2"/><rect x="11.5" y="12" width="2.5" height="6" fill="#9a9a9a"/><rect x="14.5" y="9" width="2.5" height="9" fill="#3a9be8"/><rect x="17.5" y="11" width="2.5" height="7" fill="#9a9a9a"/><path d="M22.5 20.5 L31 30" stroke="#d9d9d9" stroke-width="1.4"/></svg>
<div class="t" style="left:1824.2px;top:98.19px;font-size:11px;color:#e2e2e2;font-weight:normal;">Analyse</div>
<div class="t" style="left:1832px;top:110.19px;font-size:11px;color:#e2e2e2;font-weight:normal;">Data</div>
<div class="t" style="left:3.5px;top:135.02px;font-size:12.5px;color:#e2e2e2;font-weight:normal;">I22</div>
<svg class="r" style="left:65px;top:132px;" width="9" height="21" viewBox="0 0 9 21"><path d="M4.5 1 L8.5 7 H0.5 Z" fill="#a9a9a9"/><path d="M4.5 19.5 L8.5 13 H0.5 Z" fill="#a9a9a9"/></svg>
<div class="r" style="left:78px;top:130px;width:1.5px;height:25px;background:#2c2c2c;"></div>
<svg class="r" style="left:93px;top:137px;" width="11" height="11" viewBox="0 0 11 11"><path d="M1 1 L10 10 M10 1 L1 10" stroke="#6b6b6b" stroke-width="1.9"/></svg>
<svg class="r" style="left:121px;top:138px;" width="14" height="11" viewBox="0 0 14 11"><path d="M1 5 L5 9.5 L13 1" fill="none" stroke="#6b6b6b" stroke-width="1.9"/></svg>
<div class="t" style="left:150.5px;top:134.03px;font-size:16.5px;color:#a0a0a0;font-weight:normal;font-family:&quot;Liberation Serif&quot;,serif;font-style:italic;letter-spacing:0.5px;">fx</div>
<div class="r" style="left:173.5px;top:133px;width:1710px;height:19px;border-radius:4px;background:#373737"></div>
<div class="r" style="left:493px;top:158px;width:120px;height:20px;background:#575757;"></div>
<div class="r" style="left:493px;top:178px;width:121px;height:1.5px;background:#1f7a43;"></div>
<svg class="r" style="left:0px;top:161px;" width="14" height="17" viewBox="0 0 14 17"><path d="M13 1 V16 H0 Z" fill="#5a5a5a"/></svg>
<div class="r" style="left:15px;top:158px;width:1px;height:20px;background:#777777;"></div>
<div class="r" style="left:41px;top:158px;width:1px;height:20px;background:#4a4a4a;"></div>
<div class="r" style="left:15px;top:158px;width:26px;height:20px;overflow:hidden"><div class="t" style="left:-23px;width:40px;top:4.8px;font-size:10.5px;font-weight:bold;color:#f2f2f2;text-align:center">B</div></div>
<div class="r" style="left:94px;top:158px;width:1px;height:20px;background:#4a4a4a;"></div>
<div class="t" style="left:41px;width:53px;top:162.8px;font-size:10.5px;font-weight:bold;color:#f2f2f2;text-align:center;">C</div>
<div class="r" style="left:147px;top:158px;width:1px;height:20px;background:#4a4a4a;"></div>
<div class="t" style="left:94px;width:53px;top:162.8px;font-size:10.5px;font-weight:bold;color:#f2f2f2;text-align:center;">D</div>
<div class="r" style="left:200px;top:158px;width:1px;height:20px;background:#4a4a4a;"></div>
<div class="t" style="left:147px;width:53px;top:162.8px;font-size:10.5px;font-weight:bold;color:#f2f2f2;text-align:center;">E</div>
<div class="r" style="left:253px;top:158px;width:1px;height:20px;background:#4a4a4a;"></div>
<div class="t" style="left:200px;width:53px;top:162.8px;font-size:10.5px;font-weight:bold;color:#f2f2f2;text-align:center;">F</div>
<div class="r" style="left:373px;top:158px;width:1px;height:20px;background:#4a4a4a;"></div>
<div class="t" style="left:253px;width:120px;top:162.8px;font-size:10.5px;font-weight:bold;color:#f2f2f2;text-align:center;">G</div>
<div class="r" style="left:493px;top:158px;width:1px;height:20px;background:#4a4a4a;"></div>
<div class="t" style="left:373px;width:120px;top:162.8px;font-size:10.5px;font-weight:bold;color:#f2f2f2;text-align:center;">H</div>
<div class="r" style="left:613px;top:158px;width:1px;height:20px;background:#4a4a4a;"></div>
<div class="t" style="left:493px;width:120px;top:162.8px;font-size:10.5px;font-weight:bold;color:#f2f2f2;text-align:center;">I</div>
<div class="r" style="left:733px;top:158px;width:1px;height:20px;background:#4a4a4a;"></div>
<div class="t" style="left:613px;width:120px;top:162.8px;font-size:10.5px;font-weight:bold;color:#f2f2f2;text-align:center;">J</div>
<div class="r" style="left:786px;top:158px;width:1px;height:20px;background:#4a4a4a;"></div>
<div class="t" style="left:733px;width:53px;top:162.8px;font-size:10.5px;font-weight:bold;color:#f2f2f2;text-align:center;">K</div>
<div class="r" style="left:839px;top:158px;width:1px;height:20px;background:#4a4a4a;"></div>
<div class="t" style="left:786px;width:53px;top:162.8px;font-size:10.5px;font-weight:bold;color:#f2f2f2;text-align:center;">L</div>
<div class="r" style="left:892px;top:158px;width:1px;height:20px;background:#4a4a4a;"></div>
<div class="t" style="left:839px;width:53px;top:162.8px;font-size:10.5px;font-weight:bold;color:#f2f2f2;text-align:center;">M</div>
<div class="r" style="left:945px;top:158px;width:1px;height:20px;background:#4a4a4a;"></div>
<div class="t" style="left:892px;width:53px;top:162.8px;font-size:10.5px;font-weight:bold;color:#f2f2f2;text-align:center;">N</div>
<div class="r" style="left:998px;top:158px;width:1px;height:20px;background:#4a4a4a;"></div>
<div class="t" style="left:945px;width:53px;top:162.8px;font-size:10.5px;font-weight:bold;color:#f2f2f2;text-align:center;">O</div>
<div class="r" style="left:1051px;top:158px;width:1px;height:20px;background:#4a4a4a;"></div>
<div class="t" style="left:998px;width:53px;top:162.8px;font-size:10.5px;font-weight:bold;color:#f2f2f2;text-align:center;">P</div>
<div class="r" style="left:1104px;top:158px;width:1px;height:20px;background:#4a4a4a;"></div>
<div class="t" style="left:1051px;width:53px;top:162.8px;font-size:10.5px;font-weight:bold;color:#f2f2f2;text-align:center;">Q</div>
<div class="r" style="left:1157px;top:158px;width:1px;height:20px;background:#4a4a4a;"></div>
<div class="t" style="left:1104px;width:53px;top:162.8px;font-size:10.5px;font-weight:bold;color:#f2f2f2;text-align:center;">R</div>
<div class="r" style="left:1210px;top:158px;width:1px;height:20px;background:#4a4a4a;"></div>
<div class="t" style="left:1157px;width:53px;top:162.8px;font-size:10.5px;font-weight:bold;color:#f2f2f2;text-align:center;">S</div>
<div class="r" style="left:1263px;top:158px;width:1px;height:20px;background:#4a4a4a;"></div>
<div class="t" style="left:1210px;width:53px;top:162.8px;font-size:10.5px;font-weight:bold;color:#f2f2f2;text-align:center;">T</div>
<div class="r" style="left:1316px;top:158px;width:1px;height:20px;background:#4a4a4a;"></div>
<div class="t" style="left:1263px;width:53px;top:162.8px;font-size:10.5px;font-weight:bold;color:#f2f2f2;text-align:center;">U</div>
<div class="r" style="left:1369px;top:158px;width:1px;height:20px;background:#4a4a4a;"></div>
<div class="t" style="left:1316px;width:53px;top:162.8px;font-size:10.5px;font-weight:bold;color:#f2f2f2;text-align:center;">V</div>
<div class="r" style="left:1422px;top:158px;width:1px;height:20px;background:#4a4a4a;"></div>
<div class="t" style="left:1369px;width:53px;top:162.8px;font-size:10.5px;font-weight:bold;color:#f2f2f2;text-align:center;">W</div>
<div class="r" style="left:1475px;top:158px;width:1px;height:20px;background:#4a4a4a;"></div>
<div class="t" style="left:1422px;width:53px;top:162.8px;font-size:10.5px;font-weight:bold;color:#f2f2f2;text-align:center;">X</div>
<div class="r" style="left:1528px;top:158px;width:1px;height:20px;background:#4a4a4a;"></div>
<div class="t" style="left:1475px;width:53px;top:162.8px;font-size:10.5px;font-weight:bold;color:#f2f2f2;text-align:center;">Y</div>
<div class="r" style="left:1581px;top:158px;width:1px;height:20px;background:#4a4a4a;"></div>
<div class="t" style="left:1528px;width:53px;top:162.8px;font-size:10.5px;font-weight:bold;color:#f2f2f2;text-align:center;">Z</div>
<div class="r" style="left:1634px;top:158px;width:1px;height:20px;background:#4a4a4a;"></div>
<div class="t" style="left:1581px;width:53px;top:162.8px;font-size:10.5px;font-weight:bold;color:#f2f2f2;text-align:center;">AA</div>
<div class="r" style="left:1687px;top:158px;width:1px;height:20px;background:#4a4a4a;"></div>
<div class="t" style="left:1634px;width:53px;top:162.8px;font-size:10.5px;font-weight:bold;color:#f2f2f2;text-align:center;">AB</div>
<div class="r" style="left:1740px;top:158px;width:1px;height:20px;background:#4a4a4a;"></div>
<div class="t" style="left:1687px;width:53px;top:162.8px;font-size:10.5px;font-weight:bold;color:#f2f2f2;text-align:center;">AC</div>
<div class="r" style="left:1793px;top:158px;width:1px;height:20px;background:#4a4a4a;"></div>
<div class="t" style="left:1740px;width:53px;top:162.8px;font-size:10.5px;font-weight:bold;color:#f2f2f2;text-align:center;">AD</div>
<div class="r" style="left:1846px;top:158px;width:1px;height:20px;background:#4a4a4a;"></div>
<div class="t" style="left:1793px;width:53px;top:162.8px;font-size:10.5px;font-weight:bold;color:#f2f2f2;text-align:center;">AE</div>
<div class="t" style="left:1846px;width:53px;top:162.8px;font-size:10.5px;font-weight:bold;color:#f2f2f2;text-align:center;">AF</div>
<div class="t" style="left:1899px;width:53px;top:162.8px;font-size:10.5px;font-weight:bold;color:#f2f2f2;text-align:center;">AG</div>
<div class="r" style="left:41px;top:443px;width:1px;height:231px;background:#d4d4d4;"></div>
<div class="r" style="left:94px;top:329px;width:1px;height:19px;background:#d4d4d4;"></div>
<div class="r" style="left:94px;top:443px;width:1px;height:231px;background:#d4d4d4;"></div>
<div class="r" style="left:147px;top:443px;width:1px;height:231px;background:#d4d4d4;"></div>
<div class="r" style="left:200px;top:348px;width:1px;height:19px;background:#d4d4d4;"></div>
<div class="r" style="left:200px;top:443px;width:1px;height:231px;background:#d4d4d4;"></div>
<div class="r" style="left:253px;top:348px;width:1px;height:19px;background:#d4d4d4;"></div>
<div class="r" style="left:253px;top:383px;width:1px;height:45px;background:#d4d4d4;"></div>
<div class="r" style="left:253px;top:443px;width:1px;height:231px;background:#d4d4d4;"></div>
<div class="r" style="left:373px;top:329px;width:1px;height:38px;background:#d4d4d4;"></div>
<div class="r" style="left:373px;top:383px;width:1px;height:45px;background:#d4d4d4;"></div>
<div class="r" style="left:373px;top:443px;width:1px;height:231px;background:#d4d4d4;"></div>
<div class="r" style="left:493px;top:329px;width:1px;height:38px;background:#d4d4d4;"></div>
<div class="r" style="left:493px;top:383px;width:1px;height:45px;background:#d4d4d4;"></div>
<div class="r" style="left:493px;top:443px;width:1px;height:231px;background:#d4d4d4;"></div>
<div class="r" style="left:613px;top:329px;width:1px;height:38px;background:#d4d4d4;"></div>
<div class="r" style="left:613px;top:383px;width:1px;height:45px;background:#d4d4d4;"></div>
<div class="r" style="left:613px;top:443px;width:1px;height:231px;background:#d4d4d4;"></div>
<div class="r" style="left:733px;top:179px;width:1px;height:169px;background:#d4d4d4;"></div>
<div class="r" style="left:733px;top:383px;width:1px;height:45px;background:#d4d4d4;"></div>
<div class="r" style="left:733px;top:443px;width:1px;height:231px;background:#d4d4d4;"></div>
<div class="r" style="left:786px;top:179px;width:1px;height:188px;background:#d4d4d4;"></div>
<div class="r" style="left:786px;top:383px;width:1px;height:45px;background:#d4d4d4;"></div>
<div class="r" style="left:786px;top:443px;width:1px;height:231px;background:#d4d4d4;"></div>
<div class="r" style="left:839px;top:179px;width:1px;height:188px;background:#d4d4d4;"></div>
<div class="r" style="left:839px;top:383px;width:1px;height:45px;background:#d4d4d4;"></div>
<div class="r" style="left:839px;top:443px;width:1px;height:231px;background:#d4d4d4;"></div>
<div class="r" style="left:892px;top:179px;width:1px;height:188px;background:#d4d4d4;"></div>
<div class="r" style="left:892px;top:383px;width:1px;height:45px;background:#d4d4d4;"></div>
<div class="r" style="left:892px;top:443px;width:1px;height:231px;background:#d4d4d4;"></div>
<div class="r" style="left:945px;top:179px;width:1px;height:188px;background:#d4d4d4;"></div>
<div class="r" style="left:945px;top:383px;width:1px;height:45px;background:#d4d4d4;"></div>
<div class="r" style="left:945px;top:443px;width:1px;height:231px;background:#d4d4d4;"></div>
<div class="r" style="left:998px;top:179px;width:1px;height:188px;background:#d4d4d4;"></div>
<div class="r" style="left:998px;top:383px;width:1px;height:45px;background:#d4d4d4;"></div>
<div class="r" style="left:998px;top:443px;width:1px;height:231px;background:#d4d4d4;"></div>
<div class="r" style="left:1051px;top:179px;width:1px;height:188px;background:#d4d4d4;"></div>
<div class="r" style="left:1051px;top:383px;width:1px;height:45px;background:#d4d4d4;"></div>
<div class="r" style="left:1051px;top:443px;width:1px;height:231px;background:#d4d4d4;"></div>
<div class="r" style="left:1104px;top:179px;width:1px;height:188px;background:#d4d4d4;"></div>
<div class="r" style="left:1104px;top:383px;width:1px;height:45px;background:#d4d4d4;"></div>
<div class="r" style="left:1104px;top:443px;width:1px;height:231px;background:#d4d4d4;"></div>
<div class="r" style="left:1157px;top:179px;width:1px;height:188px;background:#d4d4d4;"></div>
<div class="r" style="left:1157px;top:383px;width:1px;height:45px;background:#d4d4d4;"></div>
<div class="r" style="left:1157px;top:443px;width:1px;height:231px;background:#d4d4d4;"></div>
<div class="r" style="left:1210px;top:179px;width:1px;height:188px;background:#d4d4d4;"></div>
<div class="r" style="left:1210px;top:383px;width:1px;height:45px;background:#d4d4d4;"></div>
<div class="r" style="left:1210px;top:443px;width:1px;height:231px;background:#d4d4d4;"></div>
<div class="r" style="left:1263px;top:179px;width:1px;height:188px;background:#d4d4d4;"></div>
<div class="r" style="left:1263px;top:383px;width:1px;height:45px;background:#d4d4d4;"></div>
<div class="r" style="left:1263px;top:443px;width:1px;height:231px;background:#d4d4d4;"></div>
<div class="r" style="left:1316px;top:179px;width:1px;height:188px;background:#d4d4d4;"></div>
<div class="r" style="left:1316px;top:383px;width:1px;height:45px;background:#d4d4d4;"></div>
<div class="r" style="left:1316px;top:443px;width:1px;height:231px;background:#d4d4d4;"></div>
<div class="r" style="left:1369px;top:179px;width:1px;height:188px;background:#d4d4d4;"></div>
<div class="r" style="left:1369px;top:383px;width:1px;height:45px;background:#d4d4d4;"></div>
<div class="r" style="left:1369px;top:443px;width:1px;height:231px;background:#d4d4d4;"></div>
<div class="r" style="left:1422px;top:179px;width:1px;height:188px;background:#d4d4d4;"></div>
<div class="r" style="left:1422px;top:383px;width:1px;height:45px;background:#d4d4d4;"></div>
<div class="r" style="left:1422px;top:443px;width:1px;height:231px;background:#d4d4d4;"></div>
<div class="r" style="left:1475px;top:179px;width:1px;height:188px;background:#d4d4d4;"></div>
<div class="r" style="left:1475px;top:383px;width:1px;height:45px;background:#d4d4d4;"></div>
<div class="r" style="left:1475px;top:443px;width:1px;height:231px;background:#d4d4d4;"></div>
<div class="r" style="left:1528px;top:179px;width:1px;height:188px;background:#d4d4d4;"></div>
<div class="r" style="left:1528px;top:383px;width:1px;height:45px;background:#d4d4d4;"></div>
<div class="r" style="left:1528px;top:443px;width:1px;height:231px;background:#d4d4d4;"></div>
<div class="r" style="left:1581px;top:179px;width:1px;height:188px;background:#d4d4d4;"></div>
<div class="r" style="left:1581px;top:383px;width:1px;height:45px;background:#d4d4d4;"></div>
<div class="r" style="left:1581px;top:443px;width:1px;height:231px;background:#d4d4d4;"></div>
<div class="r" style="left:1634px;top:179px;width:1px;height:188px;background:#d4d4d4;"></div>
<div class="r" style="left:1634px;top:383px;width:1px;height:45px;background:#d4d4d4;"></div>
<div class="r" style="left:1634px;top:443px;width:1px;height:231px;background:#d4d4d4;"></div>
<div class="r" style="left:1687px;top:179px;width:1px;height:188px;background:#d4d4d4;"></div>
<div class="r" style="left:1687px;top:383px;width:1px;height:45px;background:#d4d4d4;"></div>
<div class="r" style="left:1687px;top:443px;width:1px;height:231px;background:#d4d4d4;"></div>
<div class="r" style="left:1740px;top:179px;width:1px;height:188px;background:#d4d4d4;"></div>
<div class="r" style="left:1740px;top:383px;width:1px;height:45px;background:#d4d4d4;"></div>
<div class="r" style="left:1740px;top:443px;width:1px;height:231px;background:#d4d4d4;"></div>
<div class="r" style="left:1793px;top:179px;width:1px;height:188px;background:#d4d4d4;"></div>
<div class="r" style="left:1793px;top:383px;width:1px;height:45px;background:#d4d4d4;"></div>
<div class="r" style="left:1793px;top:443px;width:1px;height:231px;background:#d4d4d4;"></div>
<div class="r" style="left:1846px;top:179px;width:1px;height:188px;background:#d4d4d4;"></div>
<div class="r" style="left:1846px;top:383px;width:1px;height:45px;background:#d4d4d4;"></div>
<div class="r" style="left:1846px;top:443px;width:1px;height:231px;background:#d4d4d4;"></div>
<div class="r" style="left:15px;top:329px;width:1862px;height:1px;background:#d4d4d4;"></div>
<div class="r" style="left:15px;top:348px;width:1862px;height:1px;background:#d4d4d4;"></div>
<div class="r" style="left:15px;top:367px;width:1862px;height:1px;background:#d4d4d4;"></div>
<div class="r" style="left:15px;top:398px;width:1862px;height:1px;background:#d4d4d4;"></div>
<div class="r" style="left:15px;top:413px;width:1862px;height:1px;background:#d4d4d4;"></div>
<div class="r" style="left:15px;top:428px;width:1862px;height:1px;background:#d4d4d4;"></div>
<div class="r" style="left:15px;top:458px;width:1862px;height:1px;background:#d4d4d4;"></div>
<div class="r" style="left:15px;top:473px;width:1862px;height:1px;background:#d4d4d4;"></div>
<div class="r" style="left:15px;top:488px;width:1862px;height:1px;background:#d4d4d4;"></div>
<div class="r" style="left:15px;top:503px;width:1862px;height:1px;background:#d4d4d4;"></div>
<div class="r" style="left:15px;top:518px;width:1862px;height:1px;background:#d4d4d4;"></div>
<div class="r" style="left:15px;top:533px;width:1862px;height:1px;background:#d4d4d4;"></div>
<div class="r" style="left:15px;top:548px;width:1862px;height:1px;background:#d4d4d4;"></div>
<div class="r" style="left:15px;top:563px;width:1862px;height:1px;background:#d4d4d4;"></div>
<div class="r" style="left:15px;top:578px;width:1862px;height:1px;background:#d4d4d4;"></div>
<div class="r" style="left:15px;top:593px;width:1862px;height:1px;background:#d4d4d4;"></div>
<div class="r" style="left:15px;top:608px;width:1862px;height:1px;background:#d4d4d4;"></div>
<div class="r" style="left:15px;top:623px;width:1862px;height:1px;background:#d4d4d4;"></div>
<div class="r" style="left:15px;top:638px;width:1862px;height:1px;background:#d4d4d4;"></div>
<div class="r" style="left:15px;top:653px;width:1862px;height:1px;background:#d4d4d4;"></div>
<div class="r" style="left:15px;top:668px;width:1862px;height:1px;background:#d4d4d4;"></div>
<div class="r" style="left:15px;top:367px;width:1862px;height:16px;background:#fec7a4;"></div>
<div class="r" style="left:15px;top:428px;width:1862px;height:16px;background:#fec7a4;"></div>
<div class="t g" style="right:1159.60px;top:203.60px;font-size:11.1px;color:#000;font-weight:normal;word-spacing:0.45px;"><b style="font-size:10.1px">Total carton count</b> The total carton count field is automatically polulated with the number you entered. If you update the total carton count(<span style="color:#ff0000">3000</span>),<span style="color:#ff0000">the number of</span></div>
<div class="t g" style="left:16.9px;top:219.60px;font-size:11.1px;color:#ff0000;font-weight:normal;letter-spacing:0.12px;">atically.</div>
<div class="t g" style="right:1364.50px;top:235.60px;font-size:11.1px;color:#000;font-weight:normal;"><b style="font-size:10.1px">Goods information</b> For each carton, enter the number of units of each goods that will be packed in the carton.</div>
<div class="t g" style="right:1541.40px;top:251.60px;font-size:11.1px;color:#000;font-weight:normal;word-spacing:0.25px;">Please check that the units that you have entered match the expected unit quantity.</div>
<div class="t g" style="right:1789.70px;top:268.45px;font-size:10.1px;color:#000;font-weight:bold;">Carton weight and dimensions</div>
<div class="t g" style="right:1747.80px;top:283.60px;font-size:11.1px;color:#ff0000;font-weight:normal;">Enter carton weight and dimensions</div>
<div class="t g" style="right:1523.80px;top:315.60px;font-size:11.1px;color:#000;font-weight:normal;word-spacing:-0.4px;">After you complete the excel spreadsheet, you can upload it to Tiktok Shop Merchant Portal</div>
<div class="t g" style="right:1831.80px;top:352.82px;font-size:12.5px;color:#000;font-weight:bold;">Packing information (units)</div>
<div class="r" style="left:613px;top:348px;width:173px;height:19px;background:#ff0000;"></div>
<div class="t g" style="left:617px;top:352.62px;font-size:12.5px;color:#ffffff;font-weight:bold;">Total carton count</div>
<div class="t g" style="left:736px;top:352.62px;font-size:12.5px;color:#ffffff;font-weight:bold;">20</div>
<div class="t g" style="right:1824.80px;top:387.45px;font-size:10.1px;color:#000;font-weight:bold;">Goods name</div>
<div class="t g" style="left:256px;top:387.45px;font-size:10.1px;color:#000;font-weight:bold;">Goods code</div>
<div class="t g" style="left:376px;top:387.45px;font-size:10.1px;color:#000;font-weight:bold;">UPC/EAN/GTIN code</div>
<div class="t g" style="left:496px;top:387.45px;font-size:10.1px;color:#000;font-weight:bold;">Planned quantity</div>
<div class="t g" style="left:616px;top:387.45px;font-size:10.1px;color:#000;font-weight:bold;">Quantity in carton</div>
<div class="t g" style="left:736px;top:387.45px;font-size:10.1px;color:#000;font-weight:bold;">C0001</div>
<div class="t g" style="left:789px;top:387.45px;font-size:10.1px;color:#000;font-weight:bold;">C0002</div>
<div class="t g" style="left:842px;top:387.45px;font-size:10.1px;color:#000;font-weight:bold;">C0003</div>
<div class="t g" style="left:895px;top:387.45px;font-size:10.1px;color:#000;font-weight:bold;">C0004</div>
<div class="t g" style="left:948px;top:387.45px;font-size:10.1px;color:#000;font-weight:bold;">C0005</div>
<div class="t g" style="left:1001px;top:387.45px;font-size:10.1px;color:#000;font-weight:bold;">C0006</div>
<div class="t g" style="left:1054px;top:387.45px;font-size:10.1px;color:#000;font-weight:bold;">C0007</div>
<div class="t g" style="left:1107px;top:387.45px;font-size:10.1px;color:#000;font-weight:bold;">C0008</div>
<div class="t g" style="left:1160px;top:387.45px;font-size:10.1px;color:#000;font-weight:bold;">C0009</div>
<div class="t g" style="left:1213px;top:387.45px;font-size:10.1px;color:#000;font-weight:bold;">C0010</div>
<div class="t g" style="left:1266px;top:387.45px;font-size:10.1px;color:#000;font-weight:bold;">C0011</div>
<div class="t g" style="left:1319px;top:387.45px;font-size:10.1px;color:#000;font-weight:bold;">C0012</div>
<div class="t g" style="left:1372px;top:387.45px;font-size:10.1px;color:#000;font-weight:bold;">C0013</div>
<div class="t g" style="left:1425px;top:387.45px;font-size:10.1px;color:#000;font-weight:bold;">C0014</div>
<div class="t g" style="left:1478px;top:387.45px;font-size:10.1px;color:#000;font-weight:bold;">C0015</div>
<div class="t g" style="left:1531px;top:387.45px;font-size:10.1px;color:#000;font-weight:bold;">C0016</div>
<div class="t g" style="left:1584px;top:387.45px;font-size:10.1px;color:#000;font-weight:bold;">C0017</div>
<div class="t g" style="left:1637px;top:387.45px;font-size:10.1px;color:#000;font-weight:bold;">C0018</div>
<div class="t g" style="left:1690px;top:387.45px;font-size:10.1px;color:#000;font-weight:bold;">C0019</div>
<div class="t g" style="left:1743px;top:387.45px;font-size:10.1px;color:#000;font-weight:bold;">C0020</div>
<div class="t g" style="right:1791.80px;top:402.45px;font-size:10.1px;color:#000;font-weight:normal;">Testcase2 yellow box</div>
<div class="t g" style="right:1780.00px;top:417.45px;font-size:10.1px;color:#000;font-weight:normal;">Testcase101010 yellow</div>
<div class="t g" style="left:256px;top:402.45px;font-size:10.1px;color:#000;font-weight:normal;">0002</div>
<div class="t g" style="left:496px;top:402.45px;font-size:10.1px;color:#000;font-weight:normal;">500</div>
<div class="t g" style="left:496px;top:417.45px;font-size:10.1px;color:#000;font-weight:normal;">300</div>
<div class="t g" style="right:1146.00px;top:402.45px;font-size:10.1px;color:#000;font-weight:normal;">500</div>
<div class="t g" style="right:1146.00px;top:417.45px;font-size:10.1px;color:#000;font-weight:normal;">300</div>
<div class="t g" style="right:1094.00px;top:402.45px;font-size:10.1px;color:#000;font-weight:normal;">100</div>
<div class="t g" style="right:1041.00px;top:402.45px;font-size:10.1px;color:#000;font-weight:normal;">100</div>
<div class="t g" style="right:988.00px;top:402.45px;font-size:10.1px;color:#000;font-weight:normal;">100</div>
<div class="t g" style="right:935.00px;top:402.45px;font-size:10.1px;color:#000;font-weight:normal;">100</div>
<div class="t g" style="right:882.00px;top:402.45px;font-size:10.1px;color:#000;font-weight:normal;">10</div>
<div class="t g" style="right:829.00px;top:402.45px;font-size:10.1px;color:#000;font-weight:normal;">10</div>
<div class="t g" style="right:776.00px;top:402.45px;font-size:10.1px;color:#000;font-weight:normal;">10</div>
<div class="t g" style="right:723.00px;top:402.45px;font-size:10.1px;color:#000;font-weight:normal;">10</div>
<div class="t g" style="right:670.00px;top:402.45px;font-size:10.1px;color:#000;font-weight:normal;">10</div>
<div class="t g" style="right:617.00px;top:402.45px;font-size:10.1px;color:#000;font-weight:normal;">10</div>
<div class="t g" style="right:564.00px;top:402.45px;font-size:10.1px;color:#000;font-weight:normal;">10</div>
<div class="t g" style="right:511.00px;top:402.45px;font-size:10.1px;color:#000;font-weight:normal;">10</div>
<div class="t g" style="right:458.00px;top:402.45px;font-size:10.1px;color:#000;font-weight:normal;">10</div>
<div class="t g" style="right:405.00px;top:402.45px;font-size:10.1px;color:#000;font-weight:normal;">10</div>
<div class="t g" style="right:1041.00px;top:417.45px;font-size:10.1px;color:#000;font-weight:normal;">100</div>
<div class="t g" style="right:352.00px;top:417.45px;font-size:10.1px;color:#000;font-weight:normal;">50</div>
<div class="t g" style="right:299.00px;top:417.45px;font-size:10.1px;color:#000;font-weight:normal;">50</div>
<div class="t g" style="right:246.00px;top:417.45px;font-size:10.1px;color:#000;font-weight:normal;">50</div>
<div class="t g" style="right:193.00px;top:417.45px;font-size:10.1px;color:#000;font-weight:normal;">30</div>
<div class="t g" style="right:140.00px;top:417.45px;font-size:10.1px;color:#000;font-weight:normal;">10</div>
<div class="t g" style="right:87.00px;top:417.45px;font-size:10.1px;color:#000;font-weight:normal;">10</div>
<svg class="r" style="left:254px;top:399px;" width="7" height="7" viewBox="0 0 7 7"><path d="M0 0 H6.5 L0 6.5 Z" fill="#1a8a1a"/></svg>
<svg class="r" style="left:494px;top:399px;" width="7" height="7" viewBox="0 0 7 7"><path d="M0 0 H6.5 L0 6.5 Z" fill="#1a8a1a"/></svg>
<svg class="r" style="left:494px;top:414px;" width="7" height="7" viewBox="0 0 7 7"><path d="M0 0 H6.5 L0 6.5 Z" fill="#1a8a1a"/></svg>
<svg class="r" style="left:734px;top:349px;" width="7" height="7" viewBox="0 0 7 7"><path d="M0 0 H6.5 L0 6.5 Z" fill="#1a8a1a"/></svg>
<div class="t g" style="left:496px;top:447.45px;font-size:10.1px;color:#000;font-weight:normal;">Carton weight</div>
<div class="t g" style="left:616px;top:447.45px;font-size:10.1px;color:#000;font-weight:normal;">g</div>
<div class="t g" style="left:496px;top:462.45px;font-size:10.1px;color:#000;font-weight:normal;">Carton width</div>
<div class="t g" style="left:616px;top:462.45px;font-size:10.1px;color:#000;font-weight:normal;">cm</div>
<div class="t g" style="left:496px;top:477.45px;font-size:10.1px;color:#000;font-weight:normal;">Carton length</div>
<div class="t g" style="left:616px;top:477.45px;font-size:10.1px;color:#000;font-weight:normal;">cm</div>
<div class="t g" style="left:496px;top:492.45px;font-size:10.1px;color:#000;font-weight:normal;">Carton height</div>
<div class="t g" style="left:616px;top:492.45px;font-size:10.1px;color:#000;font-weight:normal;">cm</div>
<div class="r" style="left:492px;top:637px;width:119px;height:14px;border:2px solid #1e6b3e"></div>
<div class="r" style="left:610px;top:650px;width:7px;height:7px;background:#ffffff;"></div>
<div class="r" style="left:611px;top:651px;width:5px;height:5px;background:#1e6b3e;"></div>
<div class="r" style="left:0px;top:179px;width:15px;height:495px;background:#161616;"></div>
<div class="r" style="left:15px;top:179px;width:1px;height:495px;background:#8a8a8a;"></div>
<div class="r" style="left:0px;top:638px;width:15px;height:15px;background:#575757;"></div>
<div class="r" style="left:14px;top:638px;width:2px;height:15px;background:#1f7a43;"></div>
<div class="r" style="left:0px;top:329px;width:15px;height:1px;background:#4a4a4a;"></div>
<div class="t" style="left:-16.4px;width:40px;text-align:center;top:316.41px;font-size:10.5px;color:#f2f2f2;font-weight:bold">1</div>
<div class="r" style="left:0px;top:348px;width:15px;height:1px;background:#4a4a4a;"></div>
<div class="t" style="left:-16.4px;width:40px;text-align:center;top:334.61px;font-size:10.5px;color:#f2f2f2;font-weight:bold">2</div>
<div class="r" style="left:0px;top:367px;width:15px;height:1px;background:#4a4a4a;"></div>
<div class="t" style="left:-16.4px;width:40px;text-align:center;top:353.61px;font-size:10.5px;color:#f2f2f2;font-weight:bold">3</div>
<div class="r" style="left:0px;top:383px;width:15px;height:1px;background:#4a4a4a;"></div>
<div class="t" style="left:-16.4px;width:40px;text-align:center;top:371.11px;font-size:10.5px;color:#f2f2f2;font-weight:bold">4</div>
<div class="r" style="left:0px;top:398px;width:15px;height:1px;background:#4a4a4a;"></div>
<div class="t" style="left:-16.4px;width:40px;text-align:center;top:386.61px;font-size:10.5px;color:#f2f2f2;font-weight:bold">5</div>
<div class="r" style="left:0px;top:413px;width:15px;height:1px;background:#4a4a4a;"></div>
<div class="t" style="left:-16.4px;width:40px;text-align:center;top:401.61px;font-size:10.5px;color:#f2f2f2;font-weight:bold">6</div>
<div class="r" style="left:0px;top:428px;width:15px;height:1px;background:#4a4a4a;"></div>
<div class="t" style="left:-16.4px;width:40px;text-align:center;top:416.61px;font-size:10.5px;color:#f2f2f2;font-weight:bold">7</div>
<div class="r" style="left:0px;top:443px;width:15px;height:1px;background:#4a4a4a;"></div>
<div class="t" style="left:-16.4px;width:40px;text-align:center;top:431.61px;font-size:10.5px;color:#f2f2f2;font-weight:bold">8</div>
<div class="r" style="left:0px;top:458px;width:15px;height:1px;background:#4a4a4a;"></div>
<div class="t" style="left:-16.4px;width:40px;text-align:center;top:446.61px;font-size:10.5px;color:#f2f2f2;font-weight:bold">9</div>
<div class="r" style="left:0px;top:473px;width:15px;height:1px;background:#4a4a4a;"></div>
<div class="t" style="left:-16.4px;width:40px;text-align:center;top:461.61px;font-size:10.5px;color:#f2f2f2;font-weight:bold">10</div>
<div class="r" style="left:0px;top:488px;width:15px;height:1px;background:#4a4a4a;"></div>
<div class="t" style="left:-16.4px;width:40px;text-align:center;top:476.61px;font-size:10.5px;color:#f2f2f2;font-weight:bold">11</div>
<div class="r" style="left:0px;top:503px;width:15px;height:1px;background:#4a4a4a;"></div>
<div class="t" style="left:-16.4px;width:40px;text-align:center;top:491.61px;font-size:10.5px;color:#f2f2f2;font-weight:bold">12</div>
<div class="r" style="left:0px;top:518px;width:15px;height:1px;background:#4a4a4a;"></div>
<div class="t" style="left:-16.4px;width:40px;text-align:center;top:506.61px;font-size:10.5px;color:#f2f2f2;font-weight:bold">13</div>
<div class="r" style="left:0px;top:533px;width:15px;height:1px;background:#4a4a4a;"></div>
<div class="t" style="left:-16.4px;width:40px;text-align:center;top:521.61px;font-size:10.5px;color:#f2f2f2;font-weight:bold">14</div>
<div class="r" style="left:0px;top:548px;width:15px;height:1px;background:#4a4a4a;"></div>
<div class="t" style="left:-16.4px;width:40px;text-align:center;top:536.61px;font-size:10.5px;color:#f2f2f2;font-weight:bold">15</div>
<div class="r" style="left:0px;top:563px;width:15px;height:1px;background:#4a4a4a;"></div>
<div class="t" style="left:-16.4px;width:40px;text-align:center;top:551.61px;font-size:10.5px;color:#f2f2f2;font-weight:bold">16</div>
<div class="r" style="left:0px;top:578px;width:15px;height:1px;background:#4a4a4a;"></div>
<div class="t" style="left:-16.4px;width:40px;text-align:center;top:566.61px;font-size:10.5px;color:#f2f2f2;font-weight:bold">17</div>
<div class="r" style="left:0px;top:593px;width:15px;height:1px;background:#4a4a4a;"></div>
<div class="t" style="left:-16.4px;width:40px;text-align:center;top:581.61px;font-size:10.5px;color:#f2f2f2;font-weight:bold">18</div>
<div class="r" style="left:0px;top:608px;width:15px;height:1px;background:#4a4a4a;"></div>
<div class="t" style="left:-16.4px;width:40px;text-align:center;top:596.61px;font-size:10.5px;color:#f2f2f2;font-weight:bold">19</div>
<div class="r" style="left:0px;top:623px;width:15px;height:1px;background:#4a4a4a;"></div>
<div class="t" style="left:-16.4px;width:40px;text-align:center;top:611.61px;font-size:10.5px;color:#f2f2f2;font-weight:bold">20</div>
<div class="r" style="left:0px;top:638px;width:15px;height:1px;background:#4a4a4a;"></div>
<div class="t" style="left:-16.4px;width:40px;text-align:center;top:626.61px;font-size:10.5px;color:#f2f2f2;font-weight:bold">21</div>
<div class="r" style="left:0px;top:653px;width:15px;height:1px;background:#4a4a4a;"></div>
<div class="t" style="left:-16.4px;width:40px;text-align:center;top:641.61px;font-size:10.5px;color:#f2f2f2;font-weight:bold">22</div>
<div class="r" style="left:0px;top:668px;width:15px;height:1px;background:#4a4a4a;"></div>
<div class="t" style="left:-16.4px;width:40px;text-align:center;top:656.61px;font-size:10.5px;color:#f2f2f2;font-weight:bold">23</div>
<div class="t" style="left:-16.4px;width:40px;text-align:center;top:671.61px;font-size:10.5px;color:#f2f2f2;font-weight:bold">24</div>
<div class="r" style="left:15px;top:179px;width:1px;height:495px;background:#8a8a8a;"></div>
<div class="r" style="left:14px;top:638px;width:2px;height:15px;background:#1f7a43;"></div>
<svg class="r" style="left:0;top:0" width="1877" height="674" viewBox="0 0 1877 674"><rect x="727" y="287" width="1146" height="231" rx="3" ry="3" fill="none" stroke="#ec5650" stroke-width="4"/><ellipse cx="811.7" cy="404.4" rx="35.7" ry="57.5" fill="none" stroke="#ec5650" stroke-width="3"/><rect x="476.7" y="437.5" width="233.2" height="154.5" rx="3" ry="3" fill="none" stroke="#ec5650" stroke-width="4"/></svg>
<div class="t" style="left:813px;top:309.38px;font-size:15.5px;color:#50b548;font-weight:normal;-webkit-text-stroke:0.35px currentColor;">第二箱是混箱</div>
<div class="t" style="left:515px;top:515.88px;font-size:15.5px;color:#ec5650;font-weight:normal;-webkit-text-stroke:0.35px currentColor;">可不填</div>
</body></html>
